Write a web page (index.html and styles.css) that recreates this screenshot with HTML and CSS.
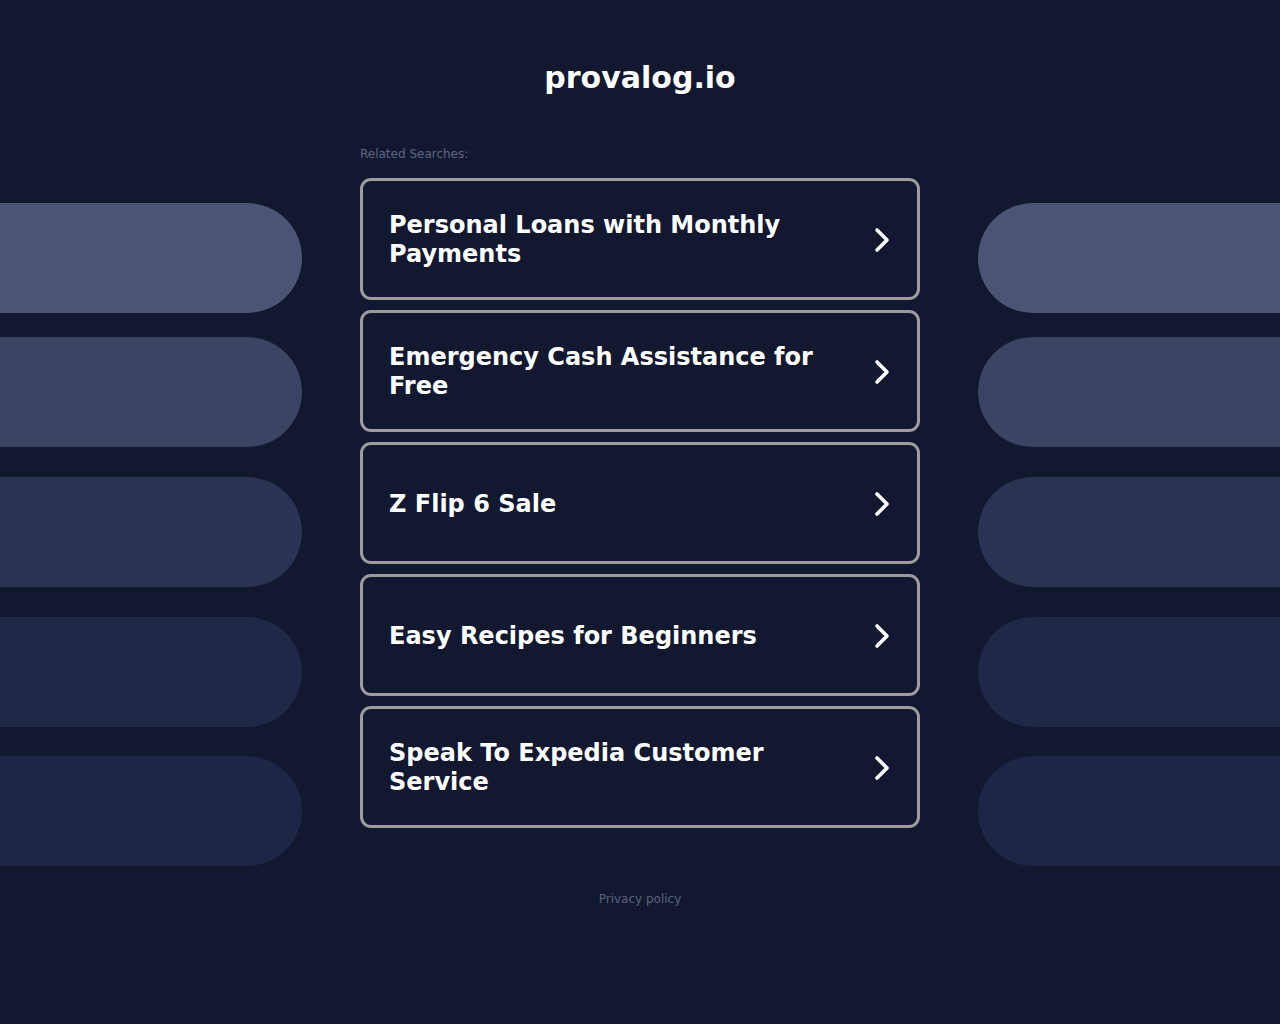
FILE: index.html
```html
<!DOCTYPE html>
<html lang="en">
<head>
    <meta charset="UTF-8">
    <meta name="viewport" content="width=device-width, initial-scale=1.0">
    <title>provalog.io</title>
    <link rel="stylesheet" href="styles.css">
</head>
<body>
    <h1 class="domain">provalog.io</h1>

    <div class="layout">
        <!-- cột trang trí bên trái -->
        <div class="side side-left">
            <div class="pill pill-1"></div>
            <div class="pill pill-2"></div>
            <div class="pill pill-3"></div>
            <div class="pill pill-4"></div>
            <div class="pill pill-5"></div>
        </div>

        <div class="main">
            <p class="related">Related Searches:</p>
            <div class="links">
                <a href="#" class="link-card">
                    <span>Personal Loans with Monthly Payments</span>
                    <svg class="chevron" viewBox="0 0 16 26"><path d="M3 3 L13 13 L3 23"/></svg>
                </a>
                <a href="#" class="link-card">
                    <span>Emergency Cash Assistance for Free</span>
                    <svg class="chevron" viewBox="0 0 16 26"><path d="M3 3 L13 13 L3 23"/></svg>
                </a>
                <a href="#" class="link-card">
                    <span>Z Flip 6 Sale</span>
                    <svg class="chevron" viewBox="0 0 16 26"><path d="M3 3 L13 13 L3 23"/></svg>
                </a>
                <a href="#" class="link-card">
                    <span>Easy Recipes for Beginners</span>
                    <svg class="chevron" viewBox="0 0 16 26"><path d="M3 3 L13 13 L3 23"/></svg>
                </a>
                <a href="#" class="link-card">
                    <span>Speak To Expedia Customer Service</span>
                    <svg class="chevron" viewBox="0 0 16 26"><path d="M3 3 L13 13 L3 23"/></svg>
                </a>
            </div>
        </div>

        <!-- cột trang trí bên phải -->
        <div class="side side-right">
            <div class="pill pill-1"></div>
            <div class="pill pill-2"></div>
            <div class="pill pill-3"></div>
            <div class="pill pill-4"></div>
            <div class="pill pill-5"></div>
        </div>
    </div>

    <div class="footer"><a href="#">Privacy policy</a></div>
</body>
</html>
```

FILE: styles.css
```css
body {
    font-family: 'DejaVu Sans', Verdana, sans-serif;
    background-color: #121830;
    color: #fff;
    margin: 0;
    padding: 0;
}
.domain {
    margin: 60px 0 0;
    font-size: 30px;
    line-height: 35px;
    text-align: center;
    font-weight: bold;
}
.layout {
    display: grid;
    grid-template-columns: 1fr 560px 1fr;
    column-gap: 58px;
    margin-top: 52px;
}
.side {
    display: flex;
    flex-direction: column;
    padding-top: 56px;
}
.pill {
    height: 110px;
    margin-bottom: 30px;
}
.pill-1 {
    background-color: #4b5573;
    margin-bottom: 24px;
}
.pill-2 { background-color: #3b4462; }
.pill-3 { background-color: #2b3352; }
.pill-4 { background-color: #1f2847; margin-bottom: 29px; }
.pill-5 { background-color: #1d2645; margin-bottom: 0; }
.side-left .pill {
    border-radius: 0 55px 55px 0;
}
.side-right .pill {
    border-radius: 55px 0 0 55px;
}
.related {
    margin: 0 0 16px;
    font-size: 12px;
    line-height: 15px;
    color: #5d6682;
}
.links {
    display: flex;
    flex-direction: column;
    gap: 10px;
}
.link-card {
    display: flex;
    align-items: center;
    justify-content: space-between;
    height: 122px;
    box-sizing: border-box;
    padding: 2px 26px 0;
    border: 3px solid #9c9c9f;
    border-radius: 11px;
    color: #fff;
    text-decoration: none;
    font-size: 24px;
    font-weight: bold;
    line-height: 29px;
}
.link-card span {
    max-width: 450px;
}
.chevron {
    width: 16px;
    height: 26px;
    flex-shrink: 0;
    margin-right: 1px;
}
.chevron path {
    fill: none;
    stroke: #fff;
    stroke-width: 3.6;
    stroke-linecap: round;
    stroke-linejoin: round;
}
.footer {
    margin-top: 26px;
    text-align: center;
    font-size: 12px;
    line-height: 15px;
}
.footer a {
    color: #5a6380;
    text-decoration: none;
}
```
